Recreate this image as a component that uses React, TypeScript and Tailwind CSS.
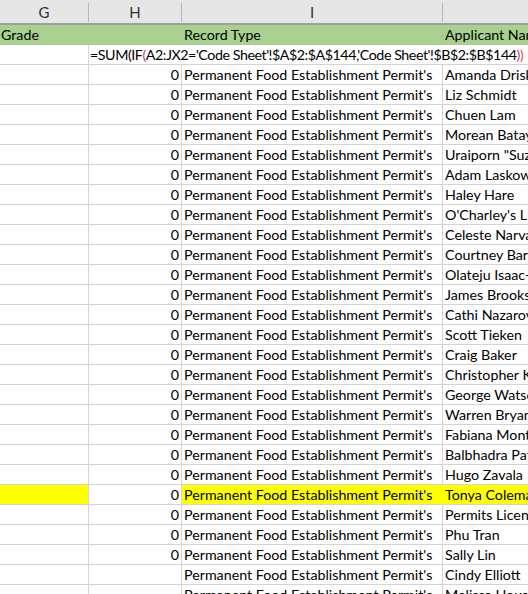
import React from 'react';

const names = [
  'Amanda Driskell',
  'Liz Schmidt',
  'Chuen Lam',
  'Morean Batayneh',
  'Uraiporn "Suzie"',
  'Adam Laskowski',
  'Haley Hare',
  "O'Charley's LLC",
  'Celeste Narvaez',
  'Courtney Barnes',
  'Olateju Isaac-Ojo',
  'James Brooks',
  'Cathi Nazarova',
  'Scott Tieken',
  'Craig Baker',
  'Christopher Kim',
  'George Watson',
  'Warren Bryant',
  'Fabiana Montero',
  'Balbhadra Patel',
  'Hugo Zavala',
  'Tonya Coleman',
  'Permits Licensing',
  'Phu Tran',
  'Sally Lin',
  'Cindy Elliott',
  'Melissa Houston',
];

const font = { fontFamily: 'Lato, "Liberation Sans", sans-serif' };

const App = () => {
  return (
    <div className="w-[528px] h-[594px] overflow-hidden bg-white text-[14.25px] text-black" style={font}>
      {/* column headers */}
      <div className="flex h-[25px] bg-[#e6e6e6] border-b-2 border-[#9f9f9f] text-[#333] text-[15px]">
        <div className="w-[89px] shrink-0 flex items-end justify-center pb-[1px]">
          <span className="w-full text-center border-r border-[#b8b8b8] leading-[19px]">G</span>
        </div>
        <div className="w-[93px] shrink-0 flex items-end justify-center pb-[1px]">
          <span className="w-full text-center border-r border-[#b8b8b8] leading-[19px]">H</span>
        </div>
        <div className="w-[261px] shrink-0 flex items-end justify-center pb-[1px]">
          <span className="w-full text-center border-r border-[#b8b8b8] leading-[19px]">I</span>
        </div>
        <div className="flex-1" />
      </div>

      {/* header row */}
      <div className="flex h-[20px] bg-[#a9d08e] leading-[20px] whitespace-nowrap">
        <div className="w-[89px] shrink-0 pl-[1px]">Grade</div>
        <div className="w-[93px] shrink-0" />
        <div className="w-[261px] shrink-0 pl-[2px]">Record Type</div>
        <div className="flex-1 pl-[2px] overflow-hidden">Applicant Name</div>
      </div>

      {/* formula row */}
      <div className="flex h-[20px] border-b border-[#d4d4d4] leading-[19px] whitespace-nowrap">
        <div className="w-[89px] shrink-0 border-r border-[#d4d4d4]" />
        <div className="flex-1 pl-[1px] overflow-hidden tracking-[-0.45px]">
          =SUM(IF<span className="text-[#c8388c]">(</span>A2:JX2='Code Sheet'!$A$2:$A$144,'Code Sheet'!$B$2:$B$144
          <span className="text-[#c8388c]">)</span>
          <span className="text-[#e0502a]">)</span>
        </div>
      </div>

      {names.map((name, i) => {
        const hl = name === 'Tonya Coleman';
        return (
          <div key={name} className="flex h-[20px] border-b border-[#d4d4d4] leading-[19px] whitespace-nowrap">
            <div className={`w-[89px] shrink-0 border-r border-[#d4d4d4] ${hl ? 'bg-[#ffff00]' : ''}`} />
            <div className="w-[93px] shrink-0 border-r border-[#d4d4d4] text-right pr-[2px]">{i < 25 ? '0' : ''}</div>
            <div className={`w-[261px] shrink-0 pl-[2px] overflow-hidden ${hl ? 'bg-[#ffff00]' : 'border-r border-[#d4d4d4]'}`}>
              Permanent Food Establishment Permit's
            </div>
            <div className={`flex-1 pl-[2px] overflow-hidden ${hl ? 'bg-[#ffff00]' : ''}`}>{name}</div>
          </div>
        );
      })}
    </div>
  );
};

export default App;
